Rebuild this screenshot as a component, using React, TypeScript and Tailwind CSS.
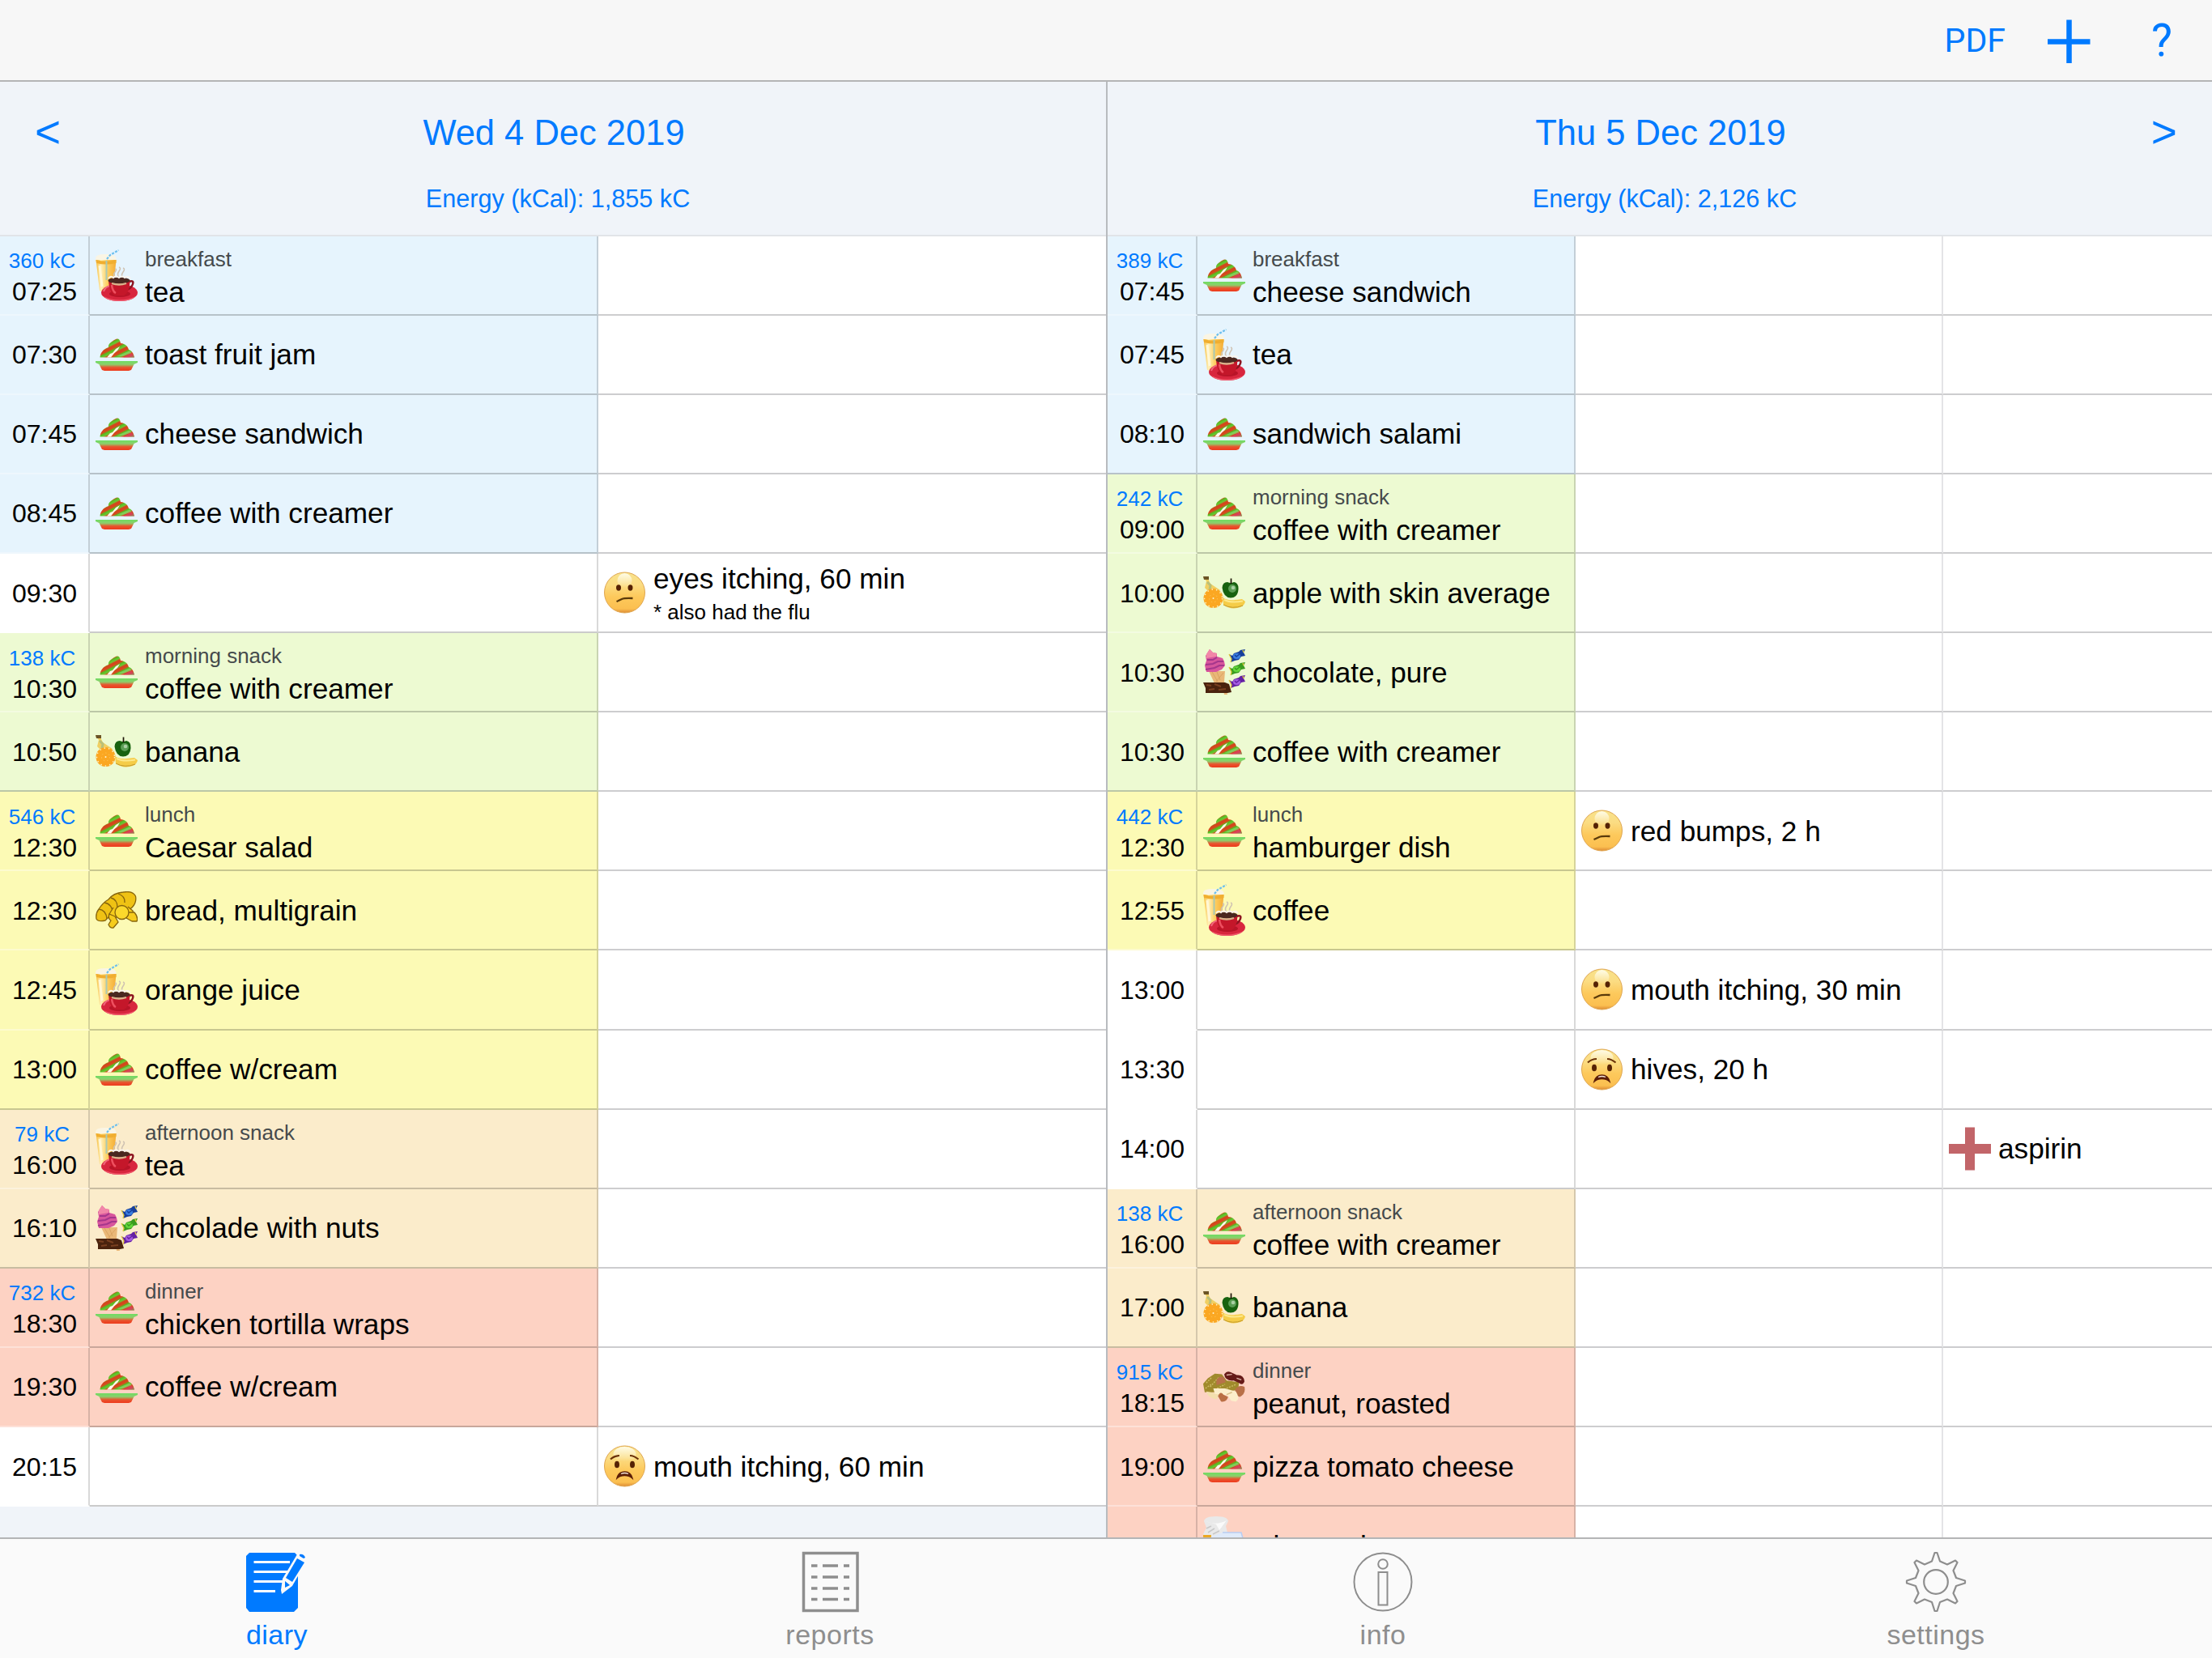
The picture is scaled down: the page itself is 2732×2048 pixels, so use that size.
import React from 'react';
import { clsx } from 'clsx';

type Meal = 'breakfast' | 'morning' | 'lunch' | 'afternoon' | 'dinner';
type IconName = 'salad' | 'drinks' | 'fruit' | 'bread' | 'sweets' | 'nuts' | 'dairy' | 'unsure' | 'sad' | 'cross';

interface Entry {
  time: string;
  meal?: Meal;
  label?: string;
  energy?: string;
  food?: [IconName, string];
  symptom?: [IconName, string, string?];
  medicine?: [IconName, string];
}

const MEAL_BG: Record<Meal, string> = {
  breakfast: 'bg-[#e6f4fd]',
  morning: 'bg-[#edfad2]',
  lunch: 'bg-[#fcfab5]',
  afternoon: 'bg-[#fbeccb]',
  dinner: 'bg-[#fdd2c3]',
};

const WEDNESDAY: Entry[] = [
  { time: '07:25', meal: 'breakfast', label: 'breakfast', energy: '360 kC', food: ['drinks', 'tea'] },
  { time: '07:30', meal: 'breakfast', food: ['salad', 'toast fruit jam'] },
  { time: '07:45', meal: 'breakfast', food: ['salad', 'cheese sandwich'] },
  { time: '08:45', meal: 'breakfast', food: ['salad', 'coffee with creamer'] },
  { time: '09:30', symptom: ['unsure', 'eyes itching, 60 min', '* also had the flu'] },
  { time: '10:30', meal: 'morning', label: 'morning snack', energy: '138 kC', food: ['salad', 'coffee with creamer'] },
  { time: '10:50', meal: 'morning', food: ['fruit', 'banana'] },
  { time: '12:30', meal: 'lunch', label: 'lunch', energy: '546 kC', food: ['salad', 'Caesar salad'] },
  { time: '12:30', meal: 'lunch', food: ['bread', 'bread, multigrain'] },
  { time: '12:45', meal: 'lunch', food: ['drinks', 'orange juice'] },
  { time: '13:00', meal: 'lunch', food: ['salad', 'coffee w/cream'] },
  { time: '16:00', meal: 'afternoon', label: 'afternoon snack', energy: '79 kC', food: ['drinks', 'tea'] },
  { time: '16:10', meal: 'afternoon', food: ['sweets', 'chcolade with nuts'] },
  { time: '18:30', meal: 'dinner', label: 'dinner', energy: '732 kC', food: ['salad', 'chicken tortilla wraps'] },
  { time: '19:30', meal: 'dinner', food: ['salad', 'coffee w/cream'] },
  { time: '20:15', symptom: ['sad', 'mouth itching, 60 min'] },
];

const THURSDAY: Entry[] = [
  { time: '07:45', meal: 'breakfast', label: 'breakfast', energy: '389 kC', food: ['salad', 'cheese sandwich'] },
  { time: '07:45', meal: 'breakfast', food: ['drinks', 'tea'] },
  { time: '08:10', meal: 'breakfast', food: ['salad', 'sandwich salami'] },
  { time: '09:00', meal: 'morning', label: 'morning snack', energy: '242 kC', food: ['salad', 'coffee with creamer'] },
  { time: '10:00', meal: 'morning', food: ['fruit', 'apple with skin average'] },
  { time: '10:30', meal: 'morning', food: ['sweets', 'chocolate, pure'] },
  { time: '10:30', meal: 'morning', food: ['salad', 'coffee with creamer'] },
  { time: '12:30', meal: 'lunch', label: 'lunch', energy: '442 kC', food: ['salad', 'hamburger dish'], symptom: ['unsure', 'red bumps, 2 h'] },
  { time: '12:55', meal: 'lunch', food: ['drinks', 'coffee'] },
  { time: '13:00', symptom: ['unsure', 'mouth itching, 30 min'] },
  { time: '13:30', symptom: ['sad', 'hives, 20 h'] },
  { time: '14:00', medicine: ['cross', 'aspirin'] },
  { time: '16:00', meal: 'afternoon', label: 'afternoon snack', energy: '138 kC', food: ['salad', 'coffee with creamer'] },
  { time: '17:00', meal: 'afternoon', food: ['fruit', 'banana'] },
  { time: '18:15', meal: 'dinner', label: 'dinner', energy: '915 kC', food: ['nuts', 'peanut, roasted'] },
  { time: '19:00', meal: 'dinner', food: ['salad', 'pizza tomato cheese'] },
  { time: '', meal: 'dinner', food: ['dairy', 'wiener pieces'] },
];

const Salad = () => (
  <svg viewBox="0 0 52 40" className="w-[52px] h-10">
    <defs>
      <linearGradient id="bowl" x1="0" y1="0" x2="0" y2="1">
        <stop offset="0" stopColor="#6fdc62" />
        <stop offset="0.35" stopColor="#8ccf6c" />
        <stop offset="0.65" stopColor="#e8552f" />
        <stop offset="1" stopColor="#ee3a1c" />
      </linearGradient>
      <linearGradient id="leaves" x1="0" y1="0" x2="4" y2="8" gradientUnits="userSpaceOnUse" spreadMethod="repeat">
        <stop offset="0" stopColor="#d8401c" />
        <stop offset="0.35" stopColor="#d0501e" />
        <stop offset="0.5" stopColor="#58b820" />
        <stop offset="0.8" stopColor="#6ac832" />
        <stop offset="1" stopColor="#d8401c" />
      </linearGradient>
    </defs>
    <path d="M5.5 23.5 C6 18 9 13.500 16 11 C15 7 20 4 24 1.500 C27 -0.500 30 0 31 6 C37 6.500 40 10 41 14 C45 15 47 19 48 23.500Z" fill="url(#leaves)" />
    <path d="M34 23.500 L44 18.500 C46 20 47.500 21 48 23.500Z" fill="#d9406e" opacity="0.7" />
    <path d="M26 22 L42 15.500 L45 18 L34 22Z" fill="#8fd676" opacity="0.6" />
    <path d="M14 23.500 L18 19 L21 18 L25 13 L30 10 L27 15 L23 18.500 L19 23.500Z" fill="#fff8ea" />
    <path d="M0 28 H52 V30 L47.500 32 L44 39 L41 40 H11 L8 39 L4.500 32 L0 30Z" fill="url(#bowl)" />
  </svg>
);

const Drinks = () => (
  <svg viewBox="0 0 52 64" className="w-[52px] h-16">
    <defs>
      <linearGradient id="juice" x1="0" y1="0" x2="1" y2="0">
        <stop offset="0" stopColor="#f7bd3c" />
        <stop offset="0.25" stopColor="#fff0b8" />
        <stop offset="0.55" stopColor="#fdd063" />
        <stop offset="1" stopColor="#f5ac34" />
      </linearGradient>
    </defs>
    <path d="M0 11 Q0 6 12 6 Q25 6 25.500 11 L25 17 H1Z" fill="#faf5e4" />
    <path d="M0.500 13 H25.500 L22 50 Q13 55 5 51Z" fill="url(#juice)" />
    <path d="M0.500 13 Q13 16 25.500 13 V17 Q13 20 1 17Z" fill="#f0ae30" />
    <path d="M5 20 L8 46" stroke="#fff7d6" strokeWidth="3" />
    <path d="M13.500 38 V14" fill="none" stroke="#a9c8b4" strokeWidth="2" />
    <path d="M14 12 L18 7 L28.500 1" fill="none" stroke="#6cbfee" strokeWidth="2.200" strokeDasharray="3 1.500" />
    <g fill="none" stroke="#cfc2b2" strokeWidth="1.500">
      <path d="M24 36 Q21 32 24 28 T24 24" />
      <path d="M29 35 Q26 31 29 27 T29 22" />
      <path d="M34 36 Q31 32 34 28 T34 23" />
    </g>
    <ellipse cx="29.500" cy="53.500" rx="22.500" ry="10.500" fill="#d8263e" />
    <path d="M10 58 Q29 67 50 58 Q44 64 29.500 64 Q15 64 10 58Z" fill="#f0586c" />
    <path d="M10 52 Q12 46 18 45" fill="none" stroke="#f0667a" strokeWidth="2" />
    <ellipse cx="30" cy="55" rx="13" ry="4" fill="#b81428" />
    <path d="M41 40 Q48.500 37.500 45.500 44 Q43 49 38 50" fill="none" stroke="#8c1420" strokeWidth="2.500" />
    <path d="M16 38 H42.500 Q42 54 35 57 H24 Q17 54 16 38Z" fill="#c4172a" />
    <path d="M20 44 Q21 52 25 54" fill="none" stroke="#ee5060" strokeWidth="2.500" />
    <ellipse cx="29" cy="38.500" rx="13.500" ry="4" fill="#4a2820" />
    <path d="M16 36 Q19 32 22 35 Q25 32 29 35 Q33 32 36 35 Q40 32 43 36" fill="none" stroke="#faf5ee" strokeWidth="2" />
    <path d="M20 42 Q29 45 38 42" fill="none" stroke="#d9b48c" strokeWidth="2.300" />
  </svg>
);

const Fruit = () => (
  <svg viewBox="0 0 52 40" className="w-[52px] h-10">
    <path d="M0 1 H7 V5 L9 9 L21 17 L17 22 L7 19 L2 14 L4 6Z" fill="#f0cf62" />
    <path d="M5 7 L9 11 L8 17" fill="none" stroke="#b9c07a" strokeWidth="3" />
    <path d="M0 0 H7 V4 H1Z" fill="#6b5426" />
    <circle cx="12.500" cy="27" r="12" fill="#fba722" />
    <circle cx="12.500" cy="27" r="11" fill="none" stroke="#fff0c0" strokeWidth="1.500" strokeDasharray="1.500 4" />
    <circle cx="12.500" cy="27" r="5" fill="none" stroke="#ffc552" strokeWidth="1" strokeDasharray="1.500 3" />
    <circle cx="12.500" cy="27" r="1" fill="#fff3cf" />
    <path d="M24 26 Q29 31 48 28 L52 31 Q51 36 46 38 Q34 42 25 35Z" fill="#f5cc48" />
    <path d="M26 29 Q34 33 49 30.500" fill="none" stroke="#fde88a" strokeWidth="2" />
    <path d="M25 35 Q36 41 49 36" fill="none" stroke="#c39a2c" strokeWidth="1" />
    <path d="M23.500 14 Q24 7 30 7 Q34 9 38 7 Q44 8 43.500 16 Q43 26 34 26.500 Q25 26 23.500 14Z" fill="#17620f" />
    <circle cx="36" cy="15" r="5" fill="#5a9d54" />
    <circle cx="37" cy="14" r="2.300" fill="#a9cfa4" />
    <path d="M34.500 9 V2.500" stroke="#1d1408" strokeWidth="1.700" />
  </svg>
);

const Bread = () => (
  <svg viewBox="0 0 52 46" className="w-[52px] h-[46px]">
    <g stroke="#87650c" strokeWidth="1.300" strokeLinejoin="round">
      <path d="M1 34 Q0 27 4 22 Q9 14 16 10 Q22 2 34 1 Q46 -1 49.500 6 Q51 14 45 20 Q40 25 30 25 L17 31 L12 36 Q3 38 1 34Z" fill="#efc214" />
      <path d="M4 22 Q13 23 14 34 M11 14 Q20 15 22 28 M19 8 Q27 10 27 20 M28 3 Q37 6 36 14" fill="none" />
      <path d="M22 20 L17 28 L23 34 L26 32 M40 19 L46 24 L48 32 L40 33" fill="#f6cc1c" />
      <path d="M17 28 Q15 34 19 36 L16 41 Q18 46 22 45 L28 38 L24 31Z" fill="#f6cc1c" />
      <path d="M40 26 L48 26 Q53 32 51 37 L45 37 L38 33Z" fill="#f6cc1c" />
      <circle cx="32.500" cy="26" r="8.500" fill="#fbd92c" />
    </g>
  </svg>
);

const Candy = ({ y, color, light }: { y: number; color: string; light: string }) => (
  <g transform={`translate(32 ${y})`}>
    <path d="M0 6 L4 8 L6 5 L12 3 L14 1 L20 0 L18 4 L20 8 L15 9 L12 13 L7 14 L2 16 L3 12Z" fill={color} />
    <ellipse cx="9.500" cy="8.500" rx="4.500" ry="3.500" fill={light} />
    <path d="M7 7 L9 9 L13 6" fill="none" stroke={color} strokeWidth="1.500" />
    <path d="M0 6 L3 12 L2 16 M17 1 L18 4" fill="none" stroke="#e2c83a" strokeWidth="1.300" />
  </g>
);

const Sweets = () => (
  <svg viewBox="0 0 52 56" className="w-[52px] h-14">
    <path d="M7 27 H27 L26 40 L30 56 H26 L24 44 L14 42Z" fill="#e9b878" />
    <path d="M11 28 L18 40 M17 28 L21 38 M25 29 L16 40" stroke="#d9a462" strokeWidth="1" />
    <path d="M8 0 L12 4 L17 5 L17 9 L24 11 L26 15 L27 20 L23 25 L16 28 L4 28 L2 20 L4 14 L3 8Z" fill="#d8569c" />
    <path d="M8 0 L12 4 L17 5 L16 9 L4 11 L4 6Z" fill="#f286a8" />
    <path d="M5 13 L12 13 L17 10 M3 19 L12 18 L18 15 L25 15 M3 25 L14 23 L20 20 L26 20" fill="none" stroke="#a5368c" strokeWidth="2" />
    <path d="M0 41 H27 L32 43 L35 53 L30 54 H3 L3 48Z" fill="#4a230e" />
    <path d="M4 44 L10 45 M14 43 L22 46 M7 50 L14 49 M19 50 L28 49" stroke="#7a4020" strokeWidth="2" />
    <Candy y={0} color="#173f9c" light="#3a7fe0" />
    <Candy y={16} color="#3a9c20" light="#64d83c" />
    <Candy y={32} color="#6420a4" light="#a45ce0" />
  </svg>
);

const Nuts = () => (
  <svg viewBox="0 0 54 40" className="w-[54px] h-10">
    <path d="M0 16 L6 9 L15 3 L24 4 L30 12 L46 14 L45 24 L24 27 L2 27Z" fill="#a08a2c" />
    <path d="M4 15 L11 8 M9 20 L20 8 M3 22 L10 17 M18 22 L28 17 M30 22 L42 17" stroke="#cdbb66" strokeWidth="1.500" strokeDasharray="2 1.500" />
    <path d="M17 12 Q20 5 27 8 L29 14 L17 18Z" fill="#b8714a" />
    <path d="M27 4 Q31 -2 37 2 L43 5 Q52 4 53 13 Q51 19 46 15 L39 12 Q28 13 27 4Z" fill="#661a18" />
    <path d="M30 5 L37 4 M43 9 L49 11" stroke="#e2b8ac" strokeWidth="1.500" />
    <path d="M41 23 Q46 17 53 20 Q55 29 47 33 L41 30Z" fill="#b87048" />
    <path d="M4 26 L20 29 L18 36 Q6 35 4 26Z" fill="#f3dfae" />
    <path d="M13 22 L28 22 L42 26 Q48 36 42 39 L36 38 L31 31 L15 29Z" fill="#fceecb" />
    <path d="M30 30 L37 27" stroke="#d8bf8a" strokeWidth="1.500" />
    <path d="M19 32 Q22 25 26 30 L32 33 Q30 40 23 39Z" fill="#ba6f44" />
  </svg>
);

const Dairy = () => (
  <svg viewBox="0 0 52 72" className="w-[52px] h-[72px]">
    <path d="M1 6 Q2 0 16 0 Q30 0 31 6 L28 12 L31 24 L24 28 H2 L0 22 L4 14Z" fill="#e9e9e9" />
    <path d="M3 6 Q16 12 29 5 L20 17 L16 10Z" fill="#fafafa" />
    <path d="M4 15 L10 12 M6 20 L14 15 M12 22 L20 18" stroke="#c8c8c8" strokeWidth="1.500" />
    <path d="M0 23 H10 L8 64 H2Z" fill="#eba824" />
    <path d="M10 25 L24 20 H47 L50 30 V64 H10Z" fill="#dfeafa" />
    <path d="M24 20 H47 L49 27" fill="none" stroke="#b8cdf2" strokeWidth="1.500" />
  </svg>
);

const Face = ({ sad }: { sad?: boolean }) => (
  <svg viewBox="0 0 52 52" className="w-[52px] h-[52px]">
    <defs>
      <linearGradient id="skin" x1="0" y1="0" x2="0" y2="1">
        <stop offset="0" stopColor="#f8e28a" />
        <stop offset="0.3" stopColor="#fbdc83" />
        <stop offset="0.6" stopColor="#fdc95c" />
        <stop offset="0.9" stopColor="#fbbf50" />
        <stop offset="1" stopColor="#dd8a34" />
      </linearGradient>
      <linearGradient id="shine" x1="0" y1="0" x2="0" y2="1">
        <stop offset="0" stopColor="#fffbe6" />
        <stop offset="1" stopColor="#fffbe6" stopOpacity="0" />
      </linearGradient>
    </defs>
    <circle cx="25.500" cy="26" r="25" fill="url(#skin)" stroke="#dfa650" strokeWidth="1" />
    <ellipse cx="25.500" cy="11" rx={sad ? 14 : 9} ry="9" fill="url(#shine)" />
    {sad ? (
      <g>
        <ellipse cx="16" cy="24" rx="3" ry="4.300" fill="#552204" />
        <ellipse cx="35" cy="24" rx="3" ry="4.300" fill="#552204" />
        <path d="M8 17.500 Q13 13 19 13 M32 13 Q37 13 42.500 17.500" fill="none" stroke="#6b3208" strokeWidth="2.200" />
        <path d="M16 41 Q18 33 25.500 33 Q33 33 35 41 Q31 37.500 25.500 37.500 Q20 37.500 16 41Z" fill="#5c1e08" stroke="#5c1e08" strokeWidth="1.500" />
        <path d="M21 35.500 Q25.500 33.500 30 35.500" fill="none" stroke="#f4e6dc" strokeWidth="1.300" />
      </g>
    ) : (
      <g>
        <ellipse cx="18" cy="20" rx="3" ry="3.700" fill="#552204" />
        <ellipse cx="32.500" cy="20" rx="3" ry="3.700" fill="#552204" />
        <path d="M15.500 37 Q19 35.500 22 34 Q25 32.500 35.500 33" fill="none" stroke="#5a3a0a" strokeWidth="2.300" />
      </g>
    )}
  </svg>
);

const Cross = () => (
  <svg viewBox="0 0 52 54" className="w-[52px] h-[54px]">
    <path d="M20 0.500 H32 V21 H52 V33 H32 V53.500 H20 V33 H0 V21 H20Z" fill="#c26569" />
  </svg>
);

const ICONS: Record<IconName, React.ReactNode> = {
  salad: <Salad />,
  drinks: <Drinks />,
  fruit: <Fruit />,
  bread: <Bread />,
  sweets: <Sweets />,
  nuts: <Nuts />,
  dairy: <Dairy />,
  unsure: <Face />,
  sad: <Face sad />,
  cross: <Cross />,
};

const Item = ({ icon, text, label, note }: { icon: IconName; text: string; label?: string; note?: string }) => (
  <div className="flex h-full items-center gap-[9px] pl-[7px] whitespace-nowrap">
    <div className="flex w-[52px] shrink-0 justify-center">{ICONS[icon]}</div>
    <div className={clsx('flex flex-col', label ? 'pt-[4px]' : note ? 'pt-[3px]' : 'pt-[1px]')}>
      {label && <span className="text-[26px] leading-[38px] text-[#454a4c]">{label}</span>}
      <span className="text-[35.200px] leading-[44px]">{text}</span>
      {note && <span className="text-[26px] leading-[38px]">{note}</span>}
    </div>
  </div>
);

interface DayProps {
  title: string;
  energy: string;
  entries: Entry[];
  prev?: boolean;
  wide?: boolean;
}

const Day: React.FC<DayProps> = ({ title, energy, entries, prev, wide }) => (
  <section className={clsx('flex min-w-0 flex-1 flex-col overflow-hidden bg-[#f0f4f9]', prev && 'border-r-2 border-[#b8bbbf]')}>
    <header className="h-[190.6px] shrink-0 border-b-2 border-[#e1e4e8] text-[#007aff]">
      <div className="flex h-32 items-center justify-between px-[43px] text-[43.500px]">
        <button className="-mt-[3px] w-8 text-left text-[55px] leading-none">{prev ? '<' : ''}</button>
        <h2 className="pl-[2px]">{title}</h2>
        <button className="-mt-[3px] flex w-8 justify-end text-[55px] leading-none">{prev ? '' : '>'}</button>
      </div>
      <p className="pt-[1px] pl-[12px] text-center text-[30.600px] leading-[31px]">{energy}</p>
    </header>
    {entries.map((entry, i) => {
      const next = entries[i + 1];
      const bg = entry.meal ? MEAL_BG[entry.meal] : 'bg-white';
      return (
        <div key={i} className="flex h-[98.100px] shrink-0 bg-white">
          <div
            className={clsx(
              'flex w-[111px] shrink-0 flex-col justify-center border-r-2 border-b-2 pr-[14px] text-right text-[32px] leading-10 border-r-black/15',
              bg,
              entry.meal && next?.label ? 'border-b-black/20' : 'border-b-white/35',
              entry.energy ? 'pt-[5px]' : 'pt-[1px]'
            )}
          >
            {entry.energy && <span className="pl-[9px] text-center text-[26px] leading-9 text-[#007aff]">{entry.energy}</span>}
            <span>{entry.time}</span>
          </div>
          <div className={clsx('shrink-0 border-r-2 border-b-2 border-r-black/15 border-b-black/20', bg, wide ? 'w-[628px]' : 'w-[467px]')}>
            {entry.food && <Item icon={entry.food[0]} text={entry.food[1]} label={entry.label} />}
          </div>
          <div className={clsx('border-b-2 border-b-[#cdcdcf]', wide ? 'flex-1' : 'w-[454px] shrink-0 border-r-2 border-r-[#e4e4e6]')}>
            {entry.symptom && <Item icon={entry.symptom[0]} text={entry.symptom[1]} note={entry.symptom[2]} />}
          </div>
          {!wide && (
            <div className="flex-1 border-b-2 border-b-[#cdcdcf]">
              {entry.medicine && <Item icon={entry.medicine[0]} text={entry.medicine[1]} />}
            </div>
          )}
        </div>
      );
    })}
  </section>
);

const DiaryIcon = () => (
  <svg viewBox="0 0 76 76" className="h-[76px] w-[76px]">
    <path d="M4 2 H60 L64 6 V70 L59 75 H4 L0 70 V6Z" fill="#007aff" />
    <path d="M9.500 13.500 H54 M9.500 25.500 H51 M9.500 37.500 H46 M9.500 49.500 H36" stroke="#fff" strokeWidth="3" />
    <path d="M66 1 L76 7 L73 15 L57 43 L44 53 L43 48 L45 34 L63 4Z" fill="#fafafa" />
    <path d="M63 9 L72 14 L57 38 L49 33Z" fill="#007aff" />
    <path d="M66 4 Q71 3 73 8 L71 9 L66 6Z" fill="#007aff" />
    <path d="M48 37 L54 42 L48 45Z" fill="#007aff" />
  </svg>
);

const ReportsIcon = () => (
  <svg viewBox="0 0 76 76" className="h-[76px] w-[76px]" fill="none" stroke="#8e8e8e">
    <rect x="5.500" y="2.500" width="66.500" height="71" strokeWidth="3.500" />
    <path
      d="M15 18 H22.500 M29 18 H48 M55 18 H62 M15 32 H22.500 M29 32 H48 M55 32 H62 M15 46 H22.500 M29 46 H48 M55 46 H62 M15 59.500 H22.500 M29 59.500 H48 M55 59.500 H62"
      strokeWidth="3.500"
    />
  </svg>
);

const InfoIcon = () => (
  <svg viewBox="0 0 76 76" className="h-[76px] w-[76px]" fill="none" stroke="#8e8e8e" strokeWidth="2">
    <circle cx="38" cy="38" r="35.500" />
    <circle cx="38" cy="16" r="5.800" />
    <rect x="32.500" y="26" width="11" height="40.500" />
  </svg>
);

const SettingsIcon = () => (
  <svg viewBox="0 0 76 76" className="h-[76px] w-[76px]" fill="none" stroke="#8e8e8e" strokeWidth="2.200" strokeLinejoin="round">
    <circle cx="38" cy="38" r="14.800" />
    <path d="M33 12.500 L36.500 2 H39.500 L43 12.500 L52 16.500 L62 11.500 L64.500 14 L59.500 24 L63 33 L74 36.500 V39.500 L63 43 L59.500 52 L64.500 62 L62 64.500 L52 59.500 L43 63 L39.500 74 H36.500 L33 63 L24 59.500 L14 64.500 L11.500 62 L16.500 52 L13 43 L2 39.500 V36.500 L13 33 L16.500 24 L11.500 14 L14 11.500 L24 16.500Z" />
  </svg>
);

const TABS = [
  { name: 'diary', icon: <DiaryIcon />, active: true },
  { name: 'reports', icon: <ReportsIcon /> },
  { name: 'info', icon: <InfoIcon /> },
  { name: 'settings', icon: <SettingsIcon /> },
];

export default function App() {
  return (
    <div className="flex h-[2048px] w-[2732px] flex-col overflow-hidden bg-[#f0f4f9] font-['Liberation_Sans',Arial,sans-serif] text-black">
      {/* Toolbar */}
      <div className="flex h-[101px] shrink-0 items-center justify-end border-b-2 border-[#b4b5b6] bg-[#f7f7f7] pr-[49px] font-[Roboto,sans-serif] text-[#007aff]">
        <button className="pt-[2px] text-[41px]">PDF</button>
        <button className="mt-[3px] ml-[51px]">
          <svg viewBox="0 0 54 54" className="h-[54px] w-[54px]">
            <path d="M27.500 0.500 V54 M1 27.500 H53.500" stroke="#007aff" strokeWidth="6.500" />
          </svg>
        </button>
        <button className="ml-[75px] pt-[2px] text-[55px]">?</button>
      </div>

      {/* Days */}
      <main className="flex min-h-0 flex-1">
        <div className="flex w-[1368px] shrink-0">
          <Day title="Wed 4 Dec 2019" energy="Energy (kCal): 1,855 kC" entries={WEDNESDAY} prev wide />
        </div>
        <Day title="Thu 5 Dec 2019" energy="Energy (kCal): 2,126 kC" entries={THURSDAY} />
      </main>

      {/* Tab bar */}
      <nav className="flex h-[149px] shrink-0 border-t-2 border-[#b4b5b6] bg-[#fafafa]">
        {TABS.map((tab) => (
          <button key={tab.name} className={clsx('flex flex-1 flex-col items-center pt-[15px]', tab.active ? 'text-[#007aff]' : 'text-[#8e8e8e]')}>
            {tab.icon}
            <span className="pt-[7px] pl-[1px] text-[34px] leading-[40px] tracking-[0.5px]">{tab.name}</span>
          </button>
        ))}
      </nav>
    </div>
  );
}
